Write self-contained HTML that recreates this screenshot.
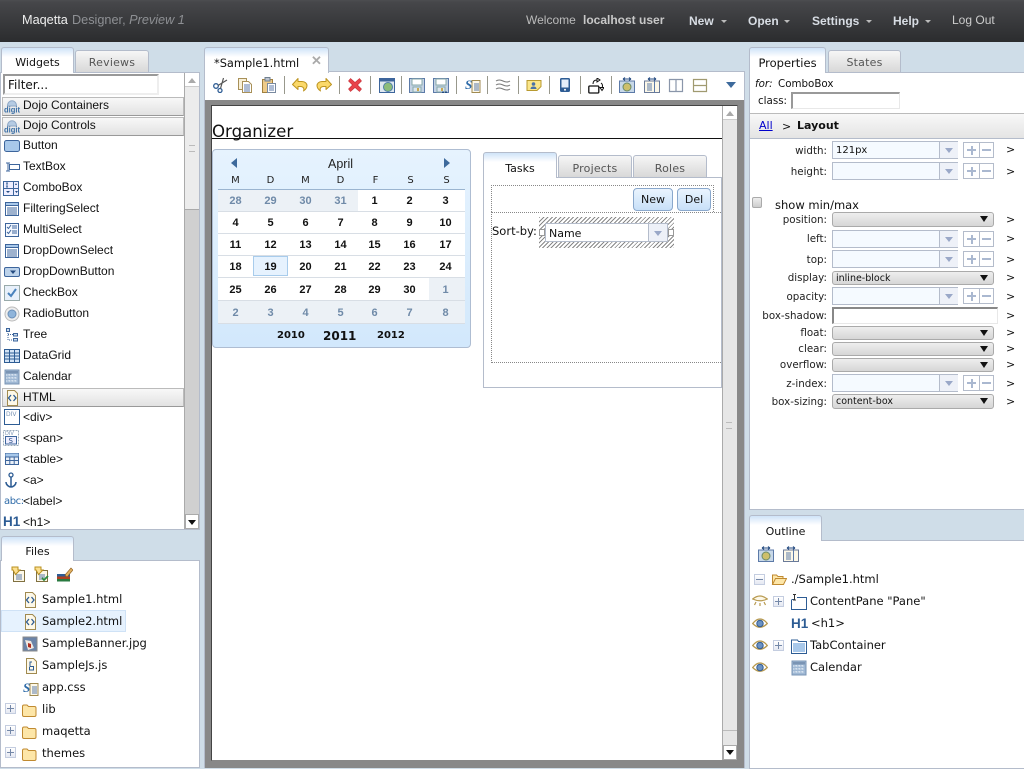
<!DOCTYPE html>
<html><head><meta charset="utf-8"><title>Maqetta</title>
<style>
html,body{margin:0;padding:0;width:1024px;height:768px;overflow:hidden;background:#cfdde8;font-family:"Liberation Sans",sans-serif;font-size:12px;color:#111}
div,span,svg{position:absolute;box-sizing:border-box}
.t{white-space:nowrap;line-height:14px}
.v{font-family:"DejaVu Sans",sans-serif;font-size:11.5px;white-space:nowrap;line-height:14px}
.n{font-family:"DejaVu Sans",sans-serif;font-size:10.3px;white-space:nowrap;line-height:14px;margin-top:1px}
.tab{background:linear-gradient(#cfe4f8,#fff 9px);border:1px solid #b4bccb;border-bottom:0;border-radius:3px 3px 0 0;text-align:center;font-family:"DejaVu Sans",sans-serif;font-size:11px;line-height:30px;color:#111}
.tab2{background:linear-gradient(#f6f6f6,#d8d8d8);border:1px solid #b4bccb;border-bottom:0;border-radius:3px 3px 0 0;text-align:center;font-family:"DejaVu Sans",sans-serif;font-size:11px;line-height:23px;color:#555;letter-spacing:.2px}
.panel{background:#fff;border:1px solid #b4bccb}
.hd{background:linear-gradient(#f8f8f8,#e2e2e2);border:1px solid #bbb;border-bottom-color:#999}
.sep{top:76px;width:1px;height:18px;background:#98988c}
.ic{width:16px;height:16px;overflow:visible}
.l{left:750px;width:77px;text-align:right;font-family:"DejaVu Sans",sans-serif;font-size:10.3px;line-height:14px;white-space:nowrap;color:#222;margin-top:1px}
.gt{left:1006px;font-family:"DejaVu Sans",sans-serif;font-size:11px;line-height:14px;color:#111;margin-top:1px}
.cb{left:832px;width:126px;height:18px;background:#f5faff;border:1px solid #b4bccb}
.cb i{position:absolute;left:106px;top:0;bottom:0;width:18px;border-left:1px solid #b4bccb;background:#eef1f8}
.cb i:after{content:"";position:absolute;left:5px;top:6px;border:4px solid transparent;border-top:5px solid #9aa8c8;border-bottom:0}
.pm{left:963px;width:31px;height:16px;border:1px solid #b4bccb;background:#fff}
.pm:before{content:"";position:absolute;left:15px;top:0;bottom:0;width:1px;background:#b4bccb}
.pm b{position:absolute;left:3px;top:6px;width:9px;height:2px;background:#aab8d0}
.pm u{position:absolute;left:6.5px;top:3px;width:2px;height:9px;background:#aab8d0}
.pm s{position:absolute;left:18px;top:6px;width:9px;height:2px;background:#aab8d0}
.sel{left:832px;width:162px;background:linear-gradient(#eeeeee,#d6d6d6);border:1px solid #aaa;border-radius:3px;font-family:"DejaVu Sans",sans-serif;font-size:9.5px;line-height:13px;padding-left:3px;color:#111}
.sel:after{content:"";position:absolute;left:147px;top:3px;border:4px solid transparent;border-top:6px solid #111;border-bottom:0}
.c{width:35px;text-align:center;font-family:"Liberation Sans",sans-serif;font-size:11px;font-weight:bold;line-height:14px;color:#111}
.g{color:#6f8aa8}
.d{width:35px;text-align:center;font-family:"DejaVu Sans",sans-serif;font-size:10px;line-height:14px;color:#222;top:174px}
.row{left:218px;width:247px;height:1px;background:#d8dee5}
.plus{width:11px;height:11px;background:linear-gradient(#fff,#e4e8f2);border:1px solid #c4cde0}
.plus:before{content:"";position:absolute;left:1px;top:4px;width:7px;height:1px;background:#7488a8}
.plus.p:after{content:"";position:absolute;left:4px;top:1px;width:1px;height:7px;background:#7488a8}
</style></head><body>
<svg width="0" height="0" style="left:0;top:0">
<defs>
<symbol id="digit" viewBox="0 0 16 16"><path d="M3.500 8c0-7 9-7 9 0z" fill="#b5cbe3" stroke="#8fa8c6"/><text x="0" y="14.500" font-size="8" font-weight="bold" font-family="Liberation Sans" fill="#3a6ea5" textLength="16" lengthAdjust="spacingAndGlyphs">digit</text></symbol>
<symbol id="btn" viewBox="0 0 16 16"><rect x=".5" y="2.500" width="15" height="11" rx="2" fill="#a8c8ea" stroke="#3d659c"/></symbol>
<symbol id="tb" viewBox="0 0 16 16"><path d="M5.500 5.500h10v5h-10zM2 4h4M2 12h4M4 4v8" fill="#fff" stroke="#3d659c"/></symbol>
<symbol id="combo" viewBox="0 0 16 16"><path d="M.5 1.500h15v14H.5zM.5 8.500h15M10.500 1.500v14M4 3v4M3 3h2M3 7h2" fill="#eef" stroke="#3d659c"/><path d="M12 5l1-2 1 2zM12 11h3l-1.500 2zM3 11h4l-2 2z" fill="#234a80"/></symbol>
<symbol id="fs" viewBox="0 0 16 16"><path d="M1.500 1.500h13v13h-13z" fill="#fff" stroke="#3d659c"/><path d="M1.500 1.500h13v3h-13z" fill="#a8c8ea" stroke="#3d659c"/><path d="M3 7h10M3 9h10M3 11h10M3 13h10" stroke="#3d659c"/></symbol>
<symbol id="ms" viewBox="0 0 16 16"><path d="M1.500 1.500h13v13h-13z" fill="#f4f8ff" stroke="#3d659c"/><path d="M3 5l1.500 1.500L7 3M3 10l1.500 1.500L7 8M8 4h5M8 6h5M8 9h5M8 11h5" fill="none" stroke="#3d659c"/></symbol>
<symbol id="ddb" viewBox="0 0 16 16"><rect x=".5" y="3.500" width="15" height="9" rx="1.500" fill="#bcd2ea" stroke="#3d659c"/><path d="M6 6.500h6L9 10z" fill="#234a80"/></symbol>
<symbol id="chk" viewBox="0 0 16 16"><rect x=".5" y=".5" width="15" height="15" fill="#e8f0fa" stroke="#9aa"/><path d="M4 8l3 3 5-7" fill="none" stroke="#4a82bd" stroke-width="2"/></symbol>
<symbol id="rad" viewBox="0 0 16 16"><circle cx="8" cy="8" r="7" fill="#eee" stroke="#bbb"/><circle cx="8" cy="8" r="4" fill="#8fb4da" stroke="#6a8fb8"/></symbol>
<symbol id="tree" viewBox="0 0 16 16"><path d="M4 2v11h5M4 7.500h5" fill="none" stroke="#3d659c" stroke-dasharray="1 1"/><path d="M2.500 1.500h3v3h-3zM9.500 6.500h4v2.500h-4zM9.500 11.500h4v2.500h-4z" fill="#cde" stroke="#3d659c"/></symbol>
<symbol id="grid" viewBox="0 0 16 16"><path d="M.5 1.500h15v13H.5z" fill="#d4e4f6" stroke="#2d5c94"/><path d="M.5 5h15M.5 8h15M.5 11h15M5.500 1.500v13M10.500 1.500v13" stroke="#2d5c94"/></symbol>
<symbol id="cal" viewBox="0 0 16 16"><rect x="1" y="1" width="14" height="14" fill="#9fb8d4" stroke="#7a94b4"/><path d="M2 6h12M2 9h12M2 12h12M5 5v9M8 5v9M11 5v9" stroke="#e8f0f8" stroke-dasharray="1.500 1.500"/><rect x="2" y="2" width="12" height="2.500" fill="#7a94b4"/></symbol>
<symbol id="html" viewBox="0 0 16 16"><path d="M3.500 .5h7l3 3v12h-10z" fill="#fdf8e8" stroke="#a08a50"/><path d="M7 5L4.500 8 7 11M9.500 5L12 8 9.500 11" fill="none" stroke="#2d5c94" stroke-width="1.300"/></symbol>
<symbol id="div" viewBox="0 0 16 16"><rect x=".5" y=".5" width="15" height="15" fill="#fff" stroke="#2d5c94"/><text x="2" y="7" font-size="6" font-family="DejaVu Sans" fill="#7a94b4">DIV</text></symbol>
<symbol id="span" viewBox="0 0 16 16"><rect x=".5" y=".5" width="15" height="15" fill="#fff" stroke="#9ab" stroke-dasharray="2 1"/><text x="2" y="5" font-size="5" font-family="DejaVu Sans" fill="#7a94b4">DIV</text><rect x="2.500" y="6.500" width="11" height="7.500" fill="#eef" stroke="#3d659c"/><text x="5.500" y="13" font-size="7" font-family="DejaVu Sans" fill="#234a80">S</text></symbol>
<symbol id="tbl" viewBox="0 0 16 16"><path d="M1.500 2.500h13v11h-13z" fill="#eaf0f8" stroke="#3d659c"/><path d="M1.500 6h13M1.500 9.500h13M5.800 6v7.500M10.200 6v7.500" stroke="#3d659c"/><rect x="1.500" y="2.500" width="13" height="3" fill="#a8c8ea"/></symbol>
<symbol id="anch" viewBox="0 0 16 16"><circle cx="8" cy="3" r="2" fill="none" stroke="#2d5c94" stroke-width="1.300"/><path d="M8 5v10M3 10c0 3 3 5 5 5s5-2 5-5" fill="none" stroke="#2d5c94" stroke-width="1.500"/></symbol>
<symbol id="file" viewBox="0 0 16 16"><path d="M3.500 .5h7l3 3v12h-10z" fill="#fdf8e8" stroke="#a08a50"/><path d="M9 4H7v4.500h3.500V12H6.500v-3M7 12h3.500" fill="none" stroke="#2d5c94"/></symbol>
<symbol id="img" viewBox="0 0 16 16"><rect x="1" y="1" width="14" height="14" fill="#6b84a8" stroke="#8a8a8a"/><path d="M3 4l6 1 3 7-6 2z" fill="#f0e8e0"/><path d="M6 7l3 1 0 4-3-1z" fill="#b03020"/></symbol>
<symbol id="css" viewBox="0 0 16 16"><path d="M7 3.500h8v12H7z" fill="#fdf8e8" stroke="#a08a50"/><path d="M9 7h5M9 9h5M9 11h5M9 13h5" stroke="#5c7aa8"/><text x="0" y="12" font-size="13" font-weight="bold" font-style="italic" font-family="Liberation Serif" fill="#2d6aa8">S</text></symbol>
<symbol id="folder" viewBox="0 0 16 16"><path d="M1.500 4.500q0-1.500 1.500-1.500h3l1.500 1.500h6q1.500 0 1.500 1.500v7q0 1.500-1.500 1.500H3q-1.500 0-1.500-1.500z" fill="#fde6a8" stroke="#c08a30"/></symbol>
<symbol id="open" viewBox="0 0 16 16"><path d="M1.500 13V4h4l1.500 1.500h5v2" fill="#fde6a8" stroke="#c08a30"/><path d="M1.500 13.500l3-6h11l-3 6z" fill="#fde6a8" stroke="#c08a30"/></symbol>
<symbol id="impf" viewBox="0 0 16 16"><path d="M3.500 4.500h11v11h-11z" fill="#fdf8e8" stroke="#807040"/><path d="M6 9h6M6 11h6M6 13h6" stroke="#5c7aa8"/><path d="M2 1h6v3h2l-4.500 4.500L3 4h-1z" fill="#fde090" stroke="#b89020"/></symbol>
<symbol id="impc" viewBox="0 0 16 16"><use href="#impf"/><path d="M9 12l2 2 4-4" fill="none" stroke="#2a8a40" stroke-width="1.800"/></symbol>
<symbol id="lib" viewBox="0 0 16 16"><rect x="0" y="8" width="13" height="2.500" fill="#2d5c94"/><rect x="0" y="10.500" width="13" height="2.500" fill="#b04020"/><rect x="0" y="13" width="13" height="2.500" fill="#2a7a40"/><path d="M8 9l6-7 2 2-6 7z" fill="#e0b060" stroke="#906020" stroke-width=".6"/></symbol>
<symbol id="cut" viewBox="0 0 16 16"><circle cx="3" cy="9" r="2.300" fill="none" stroke="#2d5c94" stroke-width="1.300"/><circle cx="7" cy="13.500" r="2" fill="none" stroke="#2d5c94" stroke-width="1.300"/><path d="M5 8.500L14 3M7.500 11.500L10.500 1" stroke="#555" stroke-width="1.200"/></symbol>
<symbol id="copy" viewBox="0 0 16 16"><path d="M1.500 1.500h8v11h-8z" fill="#f8f0d8" stroke="#a89058"/><path d="M5.500 4.500h6l3 3v8h-9z" fill="#fff" stroke="#a89058"/><path d="M7 8h6M7 10h6M7 12h6M7 14h6" stroke="#5c7aa8"/></symbol>
<symbol id="paste" viewBox="0 0 16 16"><path d="M1.500 2.500h10v13h-10z" fill="#eecb8a" stroke="#a08040"/><rect x="4" y=".5" width="5" height="3.500" fill="#bcc4d0" stroke="#708090"/><path d="M6.500 6.500h8v9h-8z" fill="#fff" stroke="#7a8aa0"/><path d="M8 9h5M8 11h5M8 13h5" stroke="#5c7aa8"/></symbol>
<symbol id="undo" viewBox="0 0 16 16"><path d="M6 1.500v3h4c3 0 5 2 5 4 0 3-2 4.500-3.500 5.500 1-2 0-4.500-3-4.500H6v3L.5 7.500z" fill="#fbd96a" stroke="#bd9420" stroke-linejoin="round"/></symbol>
<symbol id="redo" viewBox="0 0 16 16"><path d="M10 1.500v3H6c-3 0-5 2-5 4 0 3 2 4.500 3.500 5.500-1-2 0-4.500 3-4.500H10v3l5.500-5z" fill="#fbd96a" stroke="#bd9420" stroke-linejoin="round"/></symbol>
<symbol id="x" viewBox="0 0 16 16"><path d="M3.500 1.500L8 5.500l4.500-4 2 2.500-4 4 4 4-2 2.500-4.500-4-4.500 4-2-2.500 4-4-4-4z" fill="#e8424a" stroke="#c43038" stroke-width=".6"/></symbol>
<symbol id="prev" viewBox="0 0 16 16"><path d="M.5 1.500h15v14H.5z" fill="#dfe8f0" stroke="#3d659c"/><rect x=".5" y="1.500" width="15" height="3" fill="#3d659c"/><circle cx="9" cy="10" r="4.500" fill="#8cbc7a" stroke="#5080a8"/></symbol>
<symbol id="save" viewBox="0 0 16 16"><path d="M.5 1.500h15v14H.5z" fill="#c4d2e4" stroke="#5c7aa8"/><rect x="3" y="2" width="10" height="6" fill="#fff" stroke="#8aa"/><rect x="4" y="10" width="8" height="5" fill="#dde6f0" stroke="#8aa"/><rect x="8" y="11" width="2" height="3" fill="#c8a850"/></symbol>
<symbol id="saveas" viewBox="0 0 16 16"><use href="#save"/><path d="M9 14.500h2V16H9zM12 14.500h2V16h-2z" fill="#234a80"/></symbol>
<symbol id="wave" viewBox="0 0 16 16"><path d="M1 4q3-2 7 0t7 0M1 8q3-2 7 0t7 0M1 12q3-2 7 0t7 0" fill="none" stroke="#777"/></symbol>
<symbol id="note" viewBox="0 0 16 16"><path d="M1 3.500h14v6l-4 4H1z" fill="#fbe68a" stroke="#b89a30"/><circle cx="7.500" cy="7" r="1.800" fill="#4a72a8"/><path d="M4.500 12c0-2 1.500-2.500 3-2.500s3 .5 3 2.500z" fill="#4a72a8"/></symbol>
<symbol id="mob" viewBox="0 0 16 16"><rect x="3" y="1" width="10" height="14" rx="1.500" fill="#2d5c94"/><rect x="4.500" y="2.500" width="7" height="8" fill="#e4eefa"/><circle cx="8" cy="12.800" r="1" fill="#fff"/></symbol>
<symbol id="rot" viewBox="0 0 16 16"><rect x=".8" y="8" width="10" height="7" rx="1" fill="#fff" stroke="#111" stroke-width="1.300"/><path d="M5 6c0-3 2-4 4-4M9 0v4l3-2zM13 5c1.500 1 1.800 3 1 5M12 9.500h4l-2 3z" fill="none" stroke="#111" stroke-width="1"/></symbol>
<symbol id="w1" viewBox="0 0 16 16"><path d="M.5 4h15v11.500H.5z" fill="#c8d8e8" stroke="#5c7aa8"/><circle cx="8" cy="10" r="4" fill="#cdbf6a" stroke="#6a8a68"/><path d="M4 2h8M4 2l2-1.500M4 2l2 1.500M12 2l-2-1.500M12 2l-2 1.500" stroke="#234a80"/></symbol>
<symbol id="w2" viewBox="0 0 16 16"><path d="M.5 4h15v11.500H.5z" fill="#fdf8e8" stroke="#6a7a98"/><path d="M10.500 4v11.500M3 7h5M3 9h5M3 11h5M3 13h5" stroke="#5c7aa8"/><path d="M4 2h8M4 2l2-1.500M4 2l2 1.500M12 2l-2-1.500M12 2l-2 1.500" stroke="#234a80"/></symbol>
<symbol id="sp1" viewBox="0 0 16 16"><path d="M1.500 2.500h13v12h-13zM8 2.500v12" fill="#fff" stroke="#8a96aa" stroke-width="1.200"/></symbol>
<symbol id="sp2" viewBox="0 0 16 16"><path d="M1.500 2.500h13v12h-13zM1.500 8.500h13" fill="#fff" stroke="#a09a70" stroke-width="1.200"/></symbol>
<symbol id="eye" viewBox="0 0 16 16"><path d="M.7 7.500q7.300-9 14.600 0-7.300 7.500-14.600 0z" fill="#fff" stroke="#b89a50" stroke-width="1.300"/><circle cx="8" cy="7.500" r="3.200" fill="#6a92c4" stroke="#345c90"/></symbol>
<symbol id="eyec" viewBox="0 0 16 16"><path d="M.7 5q7.300-6 14.600 0-7.300 3.500-14.600 0zM4 8l-1.500 3M12 8l1.500 3M8 9v3" fill="#fdf8e8" stroke="#b89a50" stroke-width="1.200"/></symbol>
<symbol id="pane" viewBox="0 0 16 16"><path d="M1 5.500h2M6 3.500h9.500v12h-15v-10" fill="#fff" stroke="#2d5c94"/><path d="M2 .5h3M2 6h3M3.500 .5V6" stroke="#333"/></symbol>
<symbol id="tc" viewBox="0 0 16 16"><path d="M.5 3.500V2h6l1 1.500h8v12H.5z" fill="#fff" stroke="#2d5c94"/><rect x="2" y="5" width="12" height="9" fill="#a8c8ea"/></symbol>
</defs></svg>

<!-- top bar -->
<div style="left:0;top:0;width:1024px;height:42px;background:linear-gradient(#4c4d50 0,#46474a 2px,#2b2c2e 100%)"></div>
<span class="t" style="left:22px;top:13px;font-size:12.700px;color:#eee">Maqetta</span>
<span class="t" style="left:72px;top:13px;font-size:12.700px;color:#8e9094">Designer, <i>Preview 1</i></span>
<span class="t" style="left:526px;top:13px;font-size:12px;color:#bbb">Welcome</span>
<span class="t" style="left:583px;top:13px;font-size:12px;font-weight:bold;color:#c8c8c8">localhost user</span>
<span class="t" style="left:689px;top:14px;font-weight:bold;color:#d8dde4">New</span><div style="left:721px;top:20px;border:3px solid transparent;border-top:3px solid #bbb;border-bottom:0"></div>
<span class="t" style="left:748px;top:14px;font-weight:bold;color:#d8dde4">Open</span><div style="left:784px;top:20px;border:3px solid transparent;border-top:3px solid #bbb;border-bottom:0"></div>
<span class="t" style="left:812px;top:14px;font-weight:bold;color:#d8dde4">Settings</span><div style="left:866px;top:20px;border:3px solid transparent;border-top:3px solid #bbb;border-bottom:0"></div>
<span class="t" style="left:893px;top:14px;font-weight:bold;color:#d8dde4">Help</span><div style="left:925px;top:20px;border:3px solid transparent;border-top:3px solid #bbb;border-bottom:0"></div>
<span class="t" style="left:952px;top:13px;color:#ccc">Log Out</span>

<!-- Left panel -->
<div class="panel" style="left:0;top:72px;width:200px;height:458px"></div>
<div class="tab" style="left:1px;top:47px;width:73px;height:26px">Widgets</div>
<div class="tab2" style="left:75px;top:50px;width:74px;height:22px">Reviews</div>
<div style="left:3px;top:74px;width:156px;height:21px;border:2px solid #999;border-right-color:#eee;border-bottom-color:#eee;background:#fff;line-height:19px;padding-left:3px;color:#111;font-family:'DejaVu Sans',sans-serif;font-size:12px">Filter...</div>
<!-- scrollbar -->
<div style="left:184px;top:73px;width:15px;height:456px;background:#d0d0d0;border-left:1px solid #aaa"></div>
<div style="left:185px;top:73px;width:14px;height:137px;background:#ececec;border-bottom:1px solid #aaa"></div>
<div style="left:185px;top:73px;width:14px;height:14px;background:#fff;border-bottom:1px solid #ccc"></div>
<div style="left:188px;top:78px;border:4px solid transparent;border-bottom:5px solid #aaa;border-top:0"></div>
<div style="left:189px;top:145px;width:6px;height:7px;border-top:1px solid #bbb;border-bottom:1px solid #bbb"></div>
<div style="left:185px;top:514px;width:14px;height:15px;background:#fff;border:1px solid #aaa"></div>
<div style="left:188px;top:520px;border:4px solid transparent;border-top:5px solid #111;border-bottom:0"></div>

<div class="hd" style="left:2px;top:97px;width:182px;height:19px"></div>
<div class="hd" style="left:2px;top:117px;width:182px;height:19px"></div>
<div class="hd" style="left:2px;top:388px;width:182px;height:19px"></div>

<svg class="ic" style="left:4px;top:98px"><use href="#digit"/></svg><span class="t" style="left:23px;top:98px">Dojo Containers</span>
<svg class="ic" style="left:4px;top:118px"><use href="#digit"/></svg><span class="t" style="left:23px;top:118px">Dojo Controls</span>
<svg class="ic" style="left:4px;top:138px"><use href="#btn"/></svg><span class="t" style="left:23px;top:138px">Button</span>
<svg class="ic" style="left:4px;top:159px"><use href="#tb"/></svg><span class="t" style="left:23px;top:159px">TextBox</span>
<svg class="ic" style="left:3px;top:180px"><use href="#combo"/></svg><span class="t" style="left:23px;top:180px">ComboBox</span>
<svg class="ic" style="left:4px;top:201px"><use href="#fs"/></svg><span class="t" style="left:23px;top:201px">FilteringSelect</span>
<svg class="ic" style="left:4px;top:222px"><use href="#ms"/></svg><span class="t" style="left:23px;top:222px">MultiSelect</span>
<svg class="ic" style="left:4px;top:243px"><use href="#fs"/></svg><span class="t" style="left:23px;top:243px">DropDownSelect</span>
<svg class="ic" style="left:4px;top:264px"><use href="#ddb"/></svg><span class="t" style="left:23px;top:264px">DropDownButton</span>
<svg class="ic" style="left:4px;top:285px"><use href="#chk"/></svg><span class="t" style="left:23px;top:285px">CheckBox</span>
<svg class="ic" style="left:4px;top:306px"><use href="#rad"/></svg><span class="t" style="left:23px;top:306px">RadioButton</span>
<svg class="ic" style="left:4px;top:327px"><use href="#tree"/></svg><span class="t" style="left:23px;top:327px">Tree</span>
<svg class="ic" style="left:4px;top:348px"><use href="#grid"/></svg><span class="t" style="left:23px;top:348px">DataGrid</span>
<svg class="ic" style="left:4px;top:369px"><use href="#cal"/></svg><span class="t" style="left:23px;top:369px">Calendar</span>
<svg class="ic" style="left:4px;top:390px"><use href="#html"/></svg><span class="t" style="left:23px;top:390px">HTML</span>
<svg class="ic" style="left:4px;top:409px"><use href="#div"/></svg><span class="t" style="left:23px;top:410px">&lt;div&gt;</span>
<svg class="ic" style="left:3px;top:430px"><use href="#span"/></svg><span class="t" style="left:23px;top:431px">&lt;span&gt;</span>
<svg class="ic" style="left:4px;top:451px"><use href="#tbl"/></svg><span class="t" style="left:23px;top:452px">&lt;table&gt;</span>
<svg class="ic" style="left:3px;top:472px"><use href="#anch"/></svg><span class="t" style="left:23px;top:473px">&lt;a&gt;</span>
<span class="t" style="left:4px;top:495px;font-size:10px;color:#2d6aa8;font-family:'DejaVu Sans',sans-serif;letter-spacing:-.4px">abc:</span><span class="t" style="left:23px;top:494px">&lt;label&gt;</span>
<span class="t" style="left:3px;top:515px;font-size:13.500px;font-weight:bold;color:#2d5c94">H1</span><span class="t" style="left:23px;top:515px">&lt;h1&gt;</span>

<!-- Files -->
<div class="panel" style="left:0;top:560px;width:200px;height:208px"></div>
<div class="tab" style="left:1px;top:536px;width:73px;height:25px">Files</div>
<svg class="ic" style="left:10px;top:566px"><use href="#impf"/></svg>
<svg class="ic" style="left:33px;top:566px"><use href="#impc"/></svg>
<svg class="ic" style="left:57px;top:566px"><use href="#lib"/></svg>
<div style="left:1px;top:610px;width:125px;height:22px;background:#e6f2fe;border:1px solid #cfe2f6"></div>
<svg class="ic" style="left:22px;top:592px"><use href="#html"/></svg><span class="v" style="left:42px;top:592px">Sample1.html</span>
<svg class="ic" style="left:22px;top:614px"><use href="#html"/></svg><span class="v" style="left:42px;top:614px">Sample2.html</span>
<svg class="ic" style="left:22px;top:636px"><use href="#img"/></svg><span class="v" style="left:42px;top:636px">SampleBanner.jpg</span>
<svg class="ic" style="left:23px;top:658px"><use href="#file"/></svg><span class="v" style="left:42px;top:658px">SampleJs.js</span>
<svg class="ic" style="left:23px;top:680px"><use href="#css"/></svg><span class="v" style="left:42px;top:680px">app.css</span>
<div class="plus p" style="left:5px;top:703px"></div><svg class="ic" style="left:21px;top:702px"><use href="#folder"/></svg><span class="v" style="left:42px;top:702px">lib</span>
<div class="plus p" style="left:5px;top:725px"></div><svg class="ic" style="left:21px;top:724px"><use href="#folder"/></svg><span class="v" style="left:42px;top:724px">maqetta</span>
<div class="plus p" style="left:5px;top:747px"></div><svg class="ic" style="left:21px;top:746px"><use href="#folder"/></svg><span class="v" style="left:42px;top:746px">themes</span>

<!-- Editor -->
<div style="left:204px;top:72px;width:541px;height:696px;background:#888;border-left:1px solid #b4bccb;border-right:1px solid #b4bccb"></div>
<div style="left:205px;top:72px;width:539px;height:28px;background:#fff"></div>
<div style="left:204px;top:71px;width:541px;height:1px;background:#b4bccb"></div>
<div class="tab" style="left:204px;top:47px;width:125px;height:26px;text-align:left;padding-left:9px;font-size:11.400px">*Sample1.html</div>
<span class="t" style="left:311px;top:54px;font-size:13px;font-weight:bold;color:#aaa">✕</span>

<svg class="ic" style="left:213px;top:77px"><use href="#cut"/></svg>
<svg class="ic" style="left:237px;top:77px"><use href="#copy"/></svg>
<svg class="ic" style="left:261px;top:77px"><use href="#paste"/></svg>
<div class="sep" style="left:284px"></div>
<svg class="ic" style="left:292px;top:77px"><use href="#undo"/></svg>
<svg class="ic" style="left:316px;top:77px"><use href="#redo"/></svg>
<div class="sep" style="left:339px"></div>
<svg class="ic" style="left:347px;top:77px"><use href="#x"/></svg>
<div class="sep" style="left:370px"></div>
<svg class="ic" style="left:379px;top:77px"><use href="#prev"/></svg>
<div class="sep" style="left:401px"></div>
<svg class="ic" style="left:409px;top:77px"><use href="#save"/></svg>
<svg class="ic" style="left:433px;top:77px"><use href="#saveas"/></svg>
<div class="sep" style="left:456px"></div>
<svg class="ic" style="left:465px;top:77px"><use href="#css"/></svg>
<div class="sep" style="left:487px"></div>
<svg class="ic" style="left:495px;top:77px"><use href="#wave"/></svg>
<div class="sep" style="left:518px"></div>
<svg class="ic" style="left:526px;top:77px"><use href="#note"/></svg>
<div class="sep" style="left:549px"></div>
<svg class="ic" style="left:557px;top:77px"><use href="#mob"/></svg>
<div class="sep" style="left:580px"></div>
<svg class="ic" style="left:588px;top:78px"><use href="#rot"/></svg>
<div class="sep" style="left:611px"></div>
<svg class="ic" style="left:619px;top:77px"><use href="#w1"/></svg>
<svg class="ic" style="left:644px;top:77px"><use href="#w2"/></svg>
<svg class="ic" style="left:668px;top:77px"><use href="#sp1"/></svg>
<svg class="ic" style="left:692px;top:77px"><use href="#sp2"/></svg>
<div style="left:726px;top:82px;border:5px solid transparent;border-top:6px solid #3d6a9c;border-bottom:0"></div>

<!-- Canvas -->
<div style="left:211px;top:105px;width:527px;height:656px;background:#fff;border:1px solid #333;border-color:#444 #888 #888 #444"></div>
<span style="left:212px;top:122px;font-family:'DejaVu Sans',sans-serif;font-size:16.600px;line-height:20px;white-space:nowrap;color:#111">Organizer</span>
<div style="left:212px;top:138px;width:510px;height:1px;background:#111"></div>

<!-- canvas scrollbar -->
<div style="left:722px;top:106px;width:15px;height:654px;background:#e6e6e6;border-left:1px solid #aaa"></div>
<div style="left:723px;top:106px;width:14px;height:14px;background:#fff;border-bottom:1px solid #ccc"></div>
<div style="left:726px;top:111px;border:4px solid transparent;border-bottom:5px solid #aaa;border-top:0"></div>
<div style="left:726px;top:422px;width:6px;height:7px;border-top:1px solid #bbb;border-bottom:1px solid #bbb"></div>
<div style="left:723px;top:730px;width:14px;height:1px;background:#bbb"></div>
<div style="left:723px;top:745px;width:14px;height:15px;background:#fff;border:1px solid #aaa"></div>
<div style="left:726px;top:750px;border:4px solid transparent;border-top:5px solid #111;border-bottom:0"></div>

<!-- Calendar -->
<div style="left:212px;top:149px;width:259px;height:199px;border:1px solid #aebdd2;border-radius:4px;background:linear-gradient(#e6f3fe,#d2e8fc)"></div>
<div style="left:218px;top:189px;width:247px;height:1px;background:#9ab4d0"></div>
<div style="left:218px;top:190px;width:247px;height:133px;background:#fff"></div>
<div style="left:218px;top:190px;width:140px;height:21px;background:#ecf1f6"></div>
<div style="left:429px;top:278px;width:36px;height:22px;background:#ecf1f6"></div>
<div style="left:218px;top:301px;width:247px;height:22px;background:#ecf1f6"></div>
<div style="left:253px;top:256px;width:35px;height:20px;background:#e6f2fe;border:1px solid #a8ccec"></div>
<div class="row" style="top:211px"></div><div class="row" style="top:233px"></div><div class="row" style="top:255px"></div><div class="row" style="top:277px"></div><div class="row" style="top:300px"></div><div class="row" style="top:323px"></div>
<div style="left:231px;top:158px;border:5px solid transparent;border-right:6px solid #3d6a9c;border-left:0"></div>
<div style="left:444px;top:158px;border:5px solid transparent;border-left:6px solid #3d6a9c;border-right:0"></div>
<span class="t" style="left:328px;top:157px;font-size:12.500px;color:#222">April</span>
<span class="d" style="left:218px">M</span><span class="d" style="left:253px">D</span><span class="d" style="left:288px">M</span><span class="d" style="left:323px">D</span><span class="d" style="left:358px">F</span><span class="d" style="left:393px">S</span><span class="d" style="left:429px">S</span>

<span class="c g" style="left:218px;top:194px">28</span><span class="c g" style="left:253px;top:194px">29</span><span class="c g" style="left:288px;top:194px">30</span><span class="c g" style="left:323px;top:194px">31</span><span class="c" style="left:357px;top:194px">1</span><span class="c" style="left:392px;top:194px">2</span><span class="c" style="left:428px;top:194px">3</span>
<span class="c" style="left:218px;top:216px">4</span><span class="c" style="left:253px;top:216px">5</span><span class="c" style="left:288px;top:216px">6</span><span class="c" style="left:323px;top:216px">7</span><span class="c" style="left:357px;top:216px">8</span><span class="c" style="left:392px;top:216px">9</span><span class="c" style="left:428px;top:216px">10</span>
<span class="c" style="left:218px;top:238px">11</span><span class="c" style="left:253px;top:238px">12</span><span class="c" style="left:288px;top:238px">13</span><span class="c" style="left:323px;top:238px">14</span><span class="c" style="left:357px;top:238px">15</span><span class="c" style="left:392px;top:238px">16</span><span class="c" style="left:428px;top:238px">17</span>
<span class="c" style="left:218px;top:260px">18</span><span class="c" style="left:253px;top:260px">19</span><span class="c" style="left:288px;top:260px">20</span><span class="c" style="left:323px;top:260px">21</span><span class="c" style="left:357px;top:260px">22</span><span class="c" style="left:392px;top:260px">23</span><span class="c" style="left:428px;top:260px">24</span>
<span class="c" style="left:218px;top:283px">25</span><span class="c" style="left:253px;top:283px">26</span><span class="c" style="left:288px;top:283px">27</span><span class="c" style="left:323px;top:283px">28</span><span class="c" style="left:357px;top:283px">29</span><span class="c" style="left:392px;top:283px">30</span><span class="c g" style="left:428px;top:283px">1</span>
<span class="c g" style="left:218px;top:306px">2</span><span class="c g" style="left:253px;top:306px">3</span><span class="c g" style="left:288px;top:306px">4</span><span class="c g" style="left:323px;top:306px">5</span><span class="c g" style="left:357px;top:306px">6</span><span class="c g" style="left:392px;top:306px">7</span><span class="c g" style="left:428px;top:306px">8</span>
<span class="t" style="left:277px;top:329px;font-family:'DejaVu Sans',sans-serif;font-size:10px;font-weight:bold">2010</span>
<span class="t" style="left:323px;top:329px;font-family:'DejaVu Sans',sans-serif;font-size:12px;font-weight:bold">2011</span>
<span class="t" style="left:377px;top:329px;font-family:'DejaVu Sans',sans-serif;font-size:10px;font-weight:bold">2012</span>

<!-- Tab container -->
<div class="panel" style="left:483px;top:177px;width:239px;height:211px"></div>
<div class="tab" style="left:483px;top:152px;width:74px;height:26px;line-height:32px">Tasks</div>
<div class="tab2" style="left:558px;top:155px;width:74px;height:22px;line-height:25px">Projects</div>
<div class="tab2" style="left:633px;top:155px;width:74px;height:22px;line-height:25px">Roles</div>
<div style="left:491px;top:185px;width:223px;height:27px;border:1px dotted #888;border-bottom:0"></div>
<div style="left:491px;top:212px;width:230px;height:151px;border-top:1px dotted #888;border-left:1px dotted #888;border-bottom:1px dotted #888"></div>
<div style="left:633px;top:188px;width:40px;height:23px;border:1px solid #8aa8cc;border-radius:4px;background:linear-gradient(#eaf4fe,#c8e0f8);text-align:center;font-family:'DejaVu Sans',sans-serif;font-size:11px;line-height:22px">New</div>
<div style="left:677px;top:188px;width:34px;height:23px;border:1px solid #8aa8cc;border-radius:4px;background:linear-gradient(#eaf4fe,#c8e0f8);text-align:center;font-family:'DejaVu Sans',sans-serif;font-size:11px;line-height:22px">Del</div>
<span class="v" style="left:492px;top:224px">Sort-by:</span>
<div style="left:539px;top:217px;width:135px;height:31px;background:repeating-linear-gradient(135deg,#888 0,#888 1px,#fff 1px,#fff 3px)"></div>
<div style="left:545px;top:223px;width:123px;height:19px;background:#fff;border:1px solid #b4bccb"></div>
<div style="left:648px;top:224px;width:19px;height:17px;border-left:1px solid #b4bccb;background:#eef1f8"></div>
<div style="left:654px;top:231px;border:4px solid transparent;border-top:5px solid #9aa8c8;border-bottom:0"></div>
<span class="v" style="left:549px;top:227px;font-size:11px">Name</span>
<div style="left:539px;top:229px;width:6px;height:7px;background:#fff;border:1px solid #999"></div>
<div style="left:668px;top:229px;width:6px;height:7px;background:#fff;border:1px solid #999"></div>

<!-- Properties -->
<div class="panel" style="left:749px;top:72px;width:276px;height:438px"></div>
<div class="tab" style="left:749px;top:47px;width:77px;height:26px;font-size:11.500px">Properties</div>
<div class="tab2" style="left:828px;top:50px;width:73px;height:22px">States</div>
<span class="n" style="left:755px;top:76px"><i>for:</i></span><span class="n" style="left:778px;top:76px">ComboBox</span>
<span class="n" style="left:758px;top:93px">class:</span>
<div style="left:791px;top:92px;width:109px;height:17px;background:#fff;border:2px solid #999;border-right:1px solid #e8e8e8;border-bottom:1px solid #e8e8e8"></div>
<div style="left:750px;top:113px;width:274px;height:26px;background:linear-gradient(#f8f8f8,#e4e4e4);border-top:1px solid #bbb;border-bottom:1px solid #b4bccb"></div>
<span class="n" style="left:759px;top:118px;font-size:11px;color:#00c;text-decoration:underline">All</span>
<span class="n" style="left:782px;top:119px;font-size:11px">&gt;</span>
<span class="n" style="left:797px;top:118px;font-size:11px;font-weight:bold">Layout</span>

<span class="l" style="top:143px">width:</span><div class="cb" style="top:141px"><i></i></div><span class="n" style="left:836px;top:143px;font-size:10px">121px</span><div class="pm" style="top:142px"><b></b><u></u><s></s></div><span class="gt" style="top:142px">&gt;</span>
<span class="l" style="top:164px">height:</span><div class="cb" style="top:162px"><i></i></div><div class="pm" style="top:163px"><b></b><u></u><s></s></div><span class="gt" style="top:164px">&gt;</span>
<div style="left:752px;top:197px;width:10px;height:11px;background:linear-gradient(#eee,#ccc);border:1px solid #aaa;border-radius:2px"></div>
<span class="v" style="left:775px;top:198px">show min/max</span>
<span class="l" style="top:212px">position:</span><div class="sel" style="top:212px;height:15px"></div><span class="gt" style="top:212px">&gt;</span>
<span class="l" style="top:231px">left:</span><div class="cb" style="top:230px"><i></i></div><div class="pm" style="top:231px"><b></b><u></u><s></s></div><span class="gt" style="top:231px">&gt;</span>
<span class="l" style="top:252px">top:</span><div class="cb" style="top:250px"><i></i></div><div class="pm" style="top:251px"><b></b><u></u><s></s></div><span class="gt" style="top:252px">&gt;</span>
<span class="l" style="top:270px">display:</span><div class="sel" style="top:271px;height:14px">inline-block</div><span class="gt" style="top:270px">&gt;</span>
<span class="l" style="top:289px">opacity:</span><div class="cb" style="top:287px"><i></i></div><div class="pm" style="top:288px"><b></b><u></u><s></s></div><span class="gt" style="top:289px">&gt;</span>
<span class="l" style="top:308px">box-shadow:</span><div style="left:832px;top:307px;width:166px;height:17px;background:#fff;border:2px solid #888;border-right:1px solid #e8e8e8;border-bottom:1px solid #e8e8e8"></div><span class="gt" style="top:308px">&gt;</span>
<span class="l" style="top:325px">float:</span><div class="sel" style="top:326px;height:14px"></div><span class="gt" style="top:325px">&gt;</span>
<span class="l" style="top:341px">clear:</span><div class="sel" style="top:342px;height:14px"></div><span class="gt" style="top:341px">&gt;</span>
<span class="l" style="top:357px">overflow:</span><div class="sel" style="top:358px;height:14px"></div><span class="gt" style="top:357px">&gt;</span>
<span class="l" style="top:376px">z-index:</span><div class="cb" style="top:374px"><i></i></div><div class="pm" style="top:375px"><b></b><u></u><s></s></div><span class="gt" style="top:376px">&gt;</span>
<span class="l" style="top:394px">box-sizing:</span><div class="sel" style="top:394px;height:15px">content-box</div><span class="gt" style="top:394px">&gt;</span>

<!-- Outline -->
<div class="panel" style="left:749px;top:540px;width:276px;height:229px"></div>
<div class="tab" style="left:749px;top:515px;width:73px;height:26px;line-height:32px">Outline</div>
<svg class="ic" style="left:758px;top:546px"><use href="#w1"/></svg>
<svg class="ic" style="left:783px;top:546px"><use href="#w2"/></svg>
<div class="plus" style="left:754px;top:574px"></div><svg class="ic" style="left:771px;top:571px"><use href="#open"/></svg><span class="v" style="left:791px;top:572px">./Sample1.html</span>
<svg class="ic" style="left:752px;top:594px"><use href="#eyec"/></svg><div class="plus p" style="left:773px;top:596px"></div><svg class="ic" style="left:791px;top:594px"><use href="#pane"/></svg><span class="v" style="left:810px;top:594px">ContentPane "Pane"</span>
<svg class="ic" style="left:752px;top:616px"><use href="#eye"/></svg><span class="t" style="left:791px;top:617px;font-size:13.500px;font-weight:bold;color:#2d5c94">H1</span><span class="v" style="left:811px;top:616px">&lt;h1&gt;</span>
<svg class="ic" style="left:752px;top:638px"><use href="#eye"/></svg><div class="plus p" style="left:773px;top:640px"></div><svg class="ic" style="left:791px;top:638px"><use href="#tc"/></svg><span class="v" style="left:810px;top:638px">TabContainer</span>
<svg class="ic" style="left:752px;top:660px"><use href="#eye"/></svg><svg class="ic" style="left:791px;top:660px"><use href="#cal"/></svg><span class="v" style="left:810px;top:660px">Calendar</span>
</body></html>
